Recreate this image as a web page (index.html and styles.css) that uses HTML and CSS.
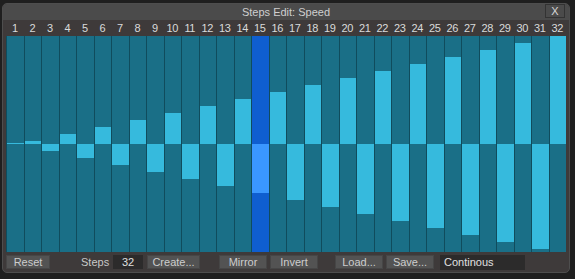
FILE: index.html
```html
<!DOCTYPE html>
<html lang="en">
<head>
    <meta charset="UTF-8">
    <title>Steps Edit: Speed</title>
    <link rel="stylesheet" href="styles.css">
</head>
<body>
    <div class="window">
        <div class="titlebar">
            <span class="title">Steps Edit: Speed</span>
            <button class="close">X</button>
        </div>
        <div class="numbers" id="numbers"></div>
        <div class="grid" id="grid"></div>
        <div class="toolbar">
            <button class="btn btn-reset">Reset</button>
            <span class="label">Steps</span>
            <span class="field field-steps">32</span>
            <button class="btn btn-create">Create...</button>
            <button class="btn btn-mirror">Mirror</button>
            <button class="btn">Invert</button>
            <button class="btn btn-load">Load...</button>
            <button class="btn">Save...</button>
            <span class="field field-mode">Continous</span>
        </div>
    </div>
    <script>
        (function() {
            var steps = 32;
            var selected = 15;
            var half = 108;
            var numbers = document.getElementById("numbers");
            var grid = document.getElementById("grid");

            for (var i = 1; i <= steps; i++) {
                var num = document.createElement("div");
                num.className = "num";
                num.innerText = i;
                numbers.appendChild(num);

                var size = Math.max(1, Math.round((i - 1) / (steps - 1) * half));
                var up = i % 2 == 0 || i == 1;

                var col = document.createElement("div");
                col.className = "step" + (i == selected ? " selected" : "");
                var upper = document.createElement("div");
                upper.className = "half half-top";
                var lower = document.createElement("div");
                lower.className = "half half-bottom";
                var bar = document.createElement("div");
                bar.className = "bar";
                bar.style.height = size + "px";
                if (up) {
                    upper.appendChild(bar);
                } else {
                    lower.appendChild(bar);
                }
                col.appendChild(upper);
                col.appendChild(lower);
                grid.appendChild(col);
            }
        })();
    </script>
</body>
</html>
```

FILE: styles.css
```css
body {
    margin: 0;
    background-color: #1f1f1f;
    font-family: "Liberation Sans", Arial, sans-serif;
    font-size: 11px;
    color: #d2d2d2;
}

.window {
    box-sizing: border-box;
    width: 568px;
    height: 270px;
    margin: 3px 0 0 2px;
    border: 1px solid #4e4e4e;
    border-radius: 5px;
    background-color: #3e3a3a;
    overflow: hidden;
}

.titlebar {
    display: grid;
    grid-template-columns: 1fr auto 1fr;
    align-items: start;
    height: 16px;
    background-color: #4b4b4b;
}

.title {
    grid-column: 2;
    line-height: 16px;
    color: #cfcfcf;
}

.close {
    grid-column: 3;
    justify-self: end;
    box-sizing: border-box;
    width: 20px;
    height: 14px;
    margin-right: 4px;
    padding: 0;
    border: 1px solid #333;
    background-color: #4b4b4b;
    color: #d8d8d8;
    font-family: inherit;
    font-size: 11px;
    line-height: 12px;
}

.numbers {
    display: flex;
    height: 16px;
    padding: 0 3px;
}

.num {
    flex: 1;
    text-align: center;
    line-height: 17px;
    letter-spacing: -0.4px;
    color: #dadada;
}

.grid {
    display: flex;
    height: 216px;
    padding: 0 3px;
}

.step {
    flex: 1;
    display: flex;
    flex-direction: column;
    border-left: 1px solid #104c5d;
    background-color: #1a6f87;
}

.step.selected {
    background-color: #0f5ed0;
}

.half {
    display: flex;
    height: 108px;
}

.half-top {
    align-items: flex-end;
}

.half-bottom {
    align-items: flex-start;
}

.bar {
    flex: 1;
    background-color: #36badd;
}

.selected .bar {
    background-color: #3a97ff;
}

.toolbar {
    display: flex;
    align-items: center;
    gap: 3px;
    height: 14px;
    padding: 3px 3px 0;
}

.btn {
    box-sizing: border-box;
    width: 48px;
    height: 14px;
    padding: 0;
    border: 1px solid #464646;
    background-color: #535353;
    color: #cdcdcd;
    font-family: inherit;
    font-size: 11px;
    line-height: 12px;
}

.btn-reset {
    width: 44px;
}

.btn-create {
    width: 53px;
    margin-left: 1px;
}

.btn-mirror {
    margin-left: 16px;
}

.btn-load {
    margin-left: 14px;
}

.label {
    width: 28px;
    margin-left: 28px;
    color: #c8c8c8;
}

.field {
    box-sizing: border-box;
    height: 14px;
    line-height: 14px;
    background-color: #2c2b2b;
    color: #e0e0e0;
}

.field-steps {
    width: 30px;
    margin-left: 1px;
    text-align: center;
}

.field-mode {
    width: 85px;
    height: 15px;
    margin-left: 3px;
    padding-left: 4px;
    line-height: 15px;
}
```
